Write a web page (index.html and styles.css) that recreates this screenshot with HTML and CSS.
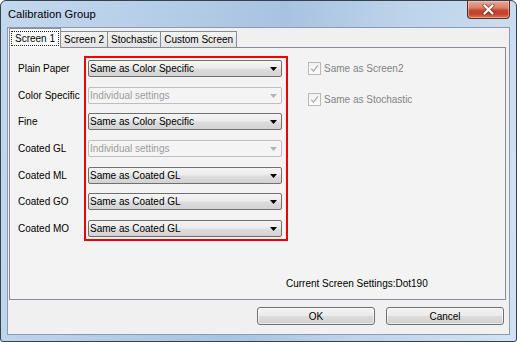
FILE: index.html
```html
<!DOCTYPE html>
<html>
<head>
<meta charset="utf-8">
<link rel="stylesheet" href="styles.css">
</head>
<body>
<div class="window">
  <div class="titlebar">
    <span class="title">Calibration Group</span>
    <div class="close">
      <svg width="13" height="11" viewBox="0 0 13 11">
        <path d="M2.5 1.5 L10.5 9.5 M10.5 1.5 L2.5 9.5" stroke="#4a2119" stroke-width="4" stroke-linecap="round" opacity="0.55"/>
        <path d="M2.5 1.5 L10.5 9.5 M10.5 1.5 L2.5 9.5" stroke="#ffffff" stroke-width="2.2" stroke-linecap="round"/>
      </svg>
    </div>
  </div>
  <div class="client">
    <div class="tabs">
      <div class="tab active"><span class="focus">Screen 1</span></div>
      <div class="tab">Screen 2</div>
      <div class="tab">Stochastic</div>
      <div class="tab">Custom Screen</div>
    </div>
    <div class="panel">
      <div class="form">
        <div class="labels">
          <div class="label">Plain Paper</div>
          <div class="label">Color Specific</div>
          <div class="label">Fine</div>
          <div class="label">Coated GL</div>
          <div class="label">Coated ML</div>
          <div class="label">Coated GO</div>
          <div class="label">Coated MO</div>
        </div>
        <div class="redbox">
          <div class="combo"><span>Same as Color Specific</span><svg class="arrow" width="7" height="4" viewBox="0 0 7 4"><polygon points="0,0 7,0 3.5,4" fill="#000"/></svg></div>
          <div class="combo disabled"><span>Individual settings</span><svg class="arrow" width="7" height="4" viewBox="0 0 7 4"><polygon points="0,0 7,0 3.5,4" fill="#b4b4b4"/></svg></div>
          <div class="combo"><span>Same as Color Specific</span><svg class="arrow" width="7" height="4" viewBox="0 0 7 4"><polygon points="0,0 7,0 3.5,4" fill="#000"/></svg></div>
          <div class="combo disabled"><span>Individual settings</span><svg class="arrow" width="7" height="4" viewBox="0 0 7 4"><polygon points="0,0 7,0 3.5,4" fill="#b4b4b4"/></svg></div>
          <div class="combo"><span>Same as Coated GL</span><svg class="arrow" width="7" height="4" viewBox="0 0 7 4"><polygon points="0,0 7,0 3.5,4" fill="#000"/></svg></div>
          <div class="combo"><span>Same as Coated GL</span><svg class="arrow" width="7" height="4" viewBox="0 0 7 4"><polygon points="0,0 7,0 3.5,4" fill="#000"/></svg></div>
          <div class="combo"><span>Same as Coated GL</span><svg class="arrow" width="7" height="4" viewBox="0 0 7 4"><polygon points="0,0 7,0 3.5,4" fill="#000"/></svg></div>
        </div>
        <div class="checks">
          <div class="check">
            <span class="box"><svg width="11" height="11" viewBox="0 0 11 11"><path d="M2.2 5.6 L4.5 8.2 L8.8 2.4" stroke="#b0b0b0" stroke-width="1.4" fill="none"/></svg></span>
            <span class="ctext">Same as Screen2</span>
          </div>
          <div class="check">
            <span class="box"><svg width="11" height="11" viewBox="0 0 11 11"><path d="M2.2 5.6 L4.5 8.2 L8.8 2.4" stroke="#b0b0b0" stroke-width="1.4" fill="none"/></svg></span>
            <span class="ctext">Same as Stochastic</span>
          </div>
        </div>
      </div>
      <div class="current">Current Screen Settings:Dot190</div>
    </div>
    <div class="buttons">
      <button class="btn">OK</button>
      <button class="btn">Cancel</button>
    </div>
  </div>
</div>
</body>
</html>
```

FILE: styles.css
```css
* { box-sizing: border-box; }
html, body { margin: 0; padding: 0; background: #ffffff; }
body { font-family: "Liberation Sans", Arial, sans-serif; font-size: 10px; color: #000; }

.window {
  width: 517px;
  height: 342px;
  display: flex;
  flex-direction: column;
  border: 1px solid #34414f;
  border-radius: 6px 6px 3px 3px;
  overflow: hidden;
  background: linear-gradient(100deg, #c3d8ee 0%, #b4cde7 30%, #a8c3e0 50%, #bcd3ea 70%, #d2e2f3 100%);
}

.titlebar {
  height: 26px;
  flex: none;
  display: flex;
  justify-content: space-between;
  align-items: flex-start;
  padding: 0 6px 0 7px;
}
.title {
  font-size: 11.2px;
  line-height: 26px;
  color: #000;
}
.close {
  width: 43px;
  height: 18px;
  border: 1px solid #5e2a21;
  border-top: none;
  border-radius: 0 0 4px 4px;
  background: linear-gradient(#e9a99b 0%, #d88169 40%, #c44a34 55%, #c33f28 75%, #d8785c 100%);
  box-shadow: inset 0 0 0 1px rgba(255, 220, 210, 0.45);
  display: flex;
  align-items: center;
  justify-content: center;
}

.client {
  flex: 1;
  margin: 0 6px 6px 6px;
  border: 1px solid #8a9bb0;
  background: #f0f0f0;
  display: flex;
  flex-direction: column;
}

.tabs {
  height: 19px;
  display: flex;
  align-items: flex-end;
  padding-left: 1px;
  position: relative;
  z-index: 1;
}
.tab {
  height: 16px;
  padding: 0 3px;
  border: 1px solid #898c95;
  border-bottom: none;
  border-left: none;
  background: linear-gradient(#f3f3f3, #e3e3e3);
  line-height: 15px;
  white-space: nowrap;
}
.tab:nth-child(2) { border-left: 1px solid #898c95; }
.tab.active {
  height: 20px;
  margin-bottom: -1px;
  padding: 2px 1px 0 1px;
  border-left: 1px solid #898c95;
  background: #fafafa;
}
.tab.active + .tab { border-left: none; }
.focus {
  display: block;
  border: 1px dotted #222;
  padding: 0 3px;
  line-height: 13px;
  height: 15px;
}

.panel {
  height: 253px;
  margin: 0 3px 0 1px;
  border: 1px solid #898c95;
  background: #f3f3f3;
  display: flex;
  flex-direction: column;
  padding: 8px 0 0 8px;
}

.form {
  display: flex;
  align-items: flex-start;
}
.labels {
  width: 66px;
  padding-top: 4px;
  display: flex;
  flex-direction: column;
  gap: 9.67px;
}
.label {
  height: 17px;
  line-height: 17px;
  white-space: nowrap;
}

.redbox {
  width: 204px;
  border: 2px solid #f00000;
  padding: 2px 4px 2px 2px;
  display: flex;
  flex-direction: column;
  gap: 9.67px;
}
.combo {
  height: 17px;
  border: 1px solid #707070;
  border-radius: 2px;
  background: linear-gradient(#f4f4f4 0%, #ececec 48%, #dedede 52%, #d2d2d2 100%);
  display: flex;
  align-items: center;
  justify-content: space-between;
  padding: 0 4px 0 1px;
  line-height: 15px;
  white-space: nowrap;
}
.combo .arrow { margin-top: 1px; }
.combo.disabled {
  border-color: #bcbfc2;
  background: #f4f4f4;
  color: #9d9d9d;
}

.checks {
  margin-left: 20px;
  padding-top: 6px;
  display: flex;
  flex-direction: column;
  gap: 18px;
}
.check {
  display: flex;
  align-items: center;
  height: 13px;
}
.box {
  width: 13px;
  height: 13px;
  border: 1px solid #b9b9b9;
  background: linear-gradient(#f2f2f2, #fbfbfb);
  display: flex;
  align-items: center;
  justify-content: center;
}
.ctext {
  margin-left: 3px;
  color: #848484;
  line-height: 13px;
  white-space: nowrap;
}

.current {
  margin-top: auto;
  margin-bottom: 9px;
  margin-left: 268px;
  line-height: 13px;
}

.buttons {
  display: flex;
  justify-content: flex-end;
  gap: 11px;
  padding: 7px 5px 0 0;
}
.btn {
  width: 118px;
  height: 18px;
  border: 1px solid #707070;
  border-radius: 3px;
  background: linear-gradient(#f2f2f2 0%, #ebebeb 48%, #dddddd 52%, #cfcfcf 100%);
  font-family: "Liberation Sans", Arial, sans-serif;
  font-size: 10px;
  color: #000;
  padding: 0;
  box-shadow: inset 0 0 0 1px rgba(255,255,255,0.6);
}
```
